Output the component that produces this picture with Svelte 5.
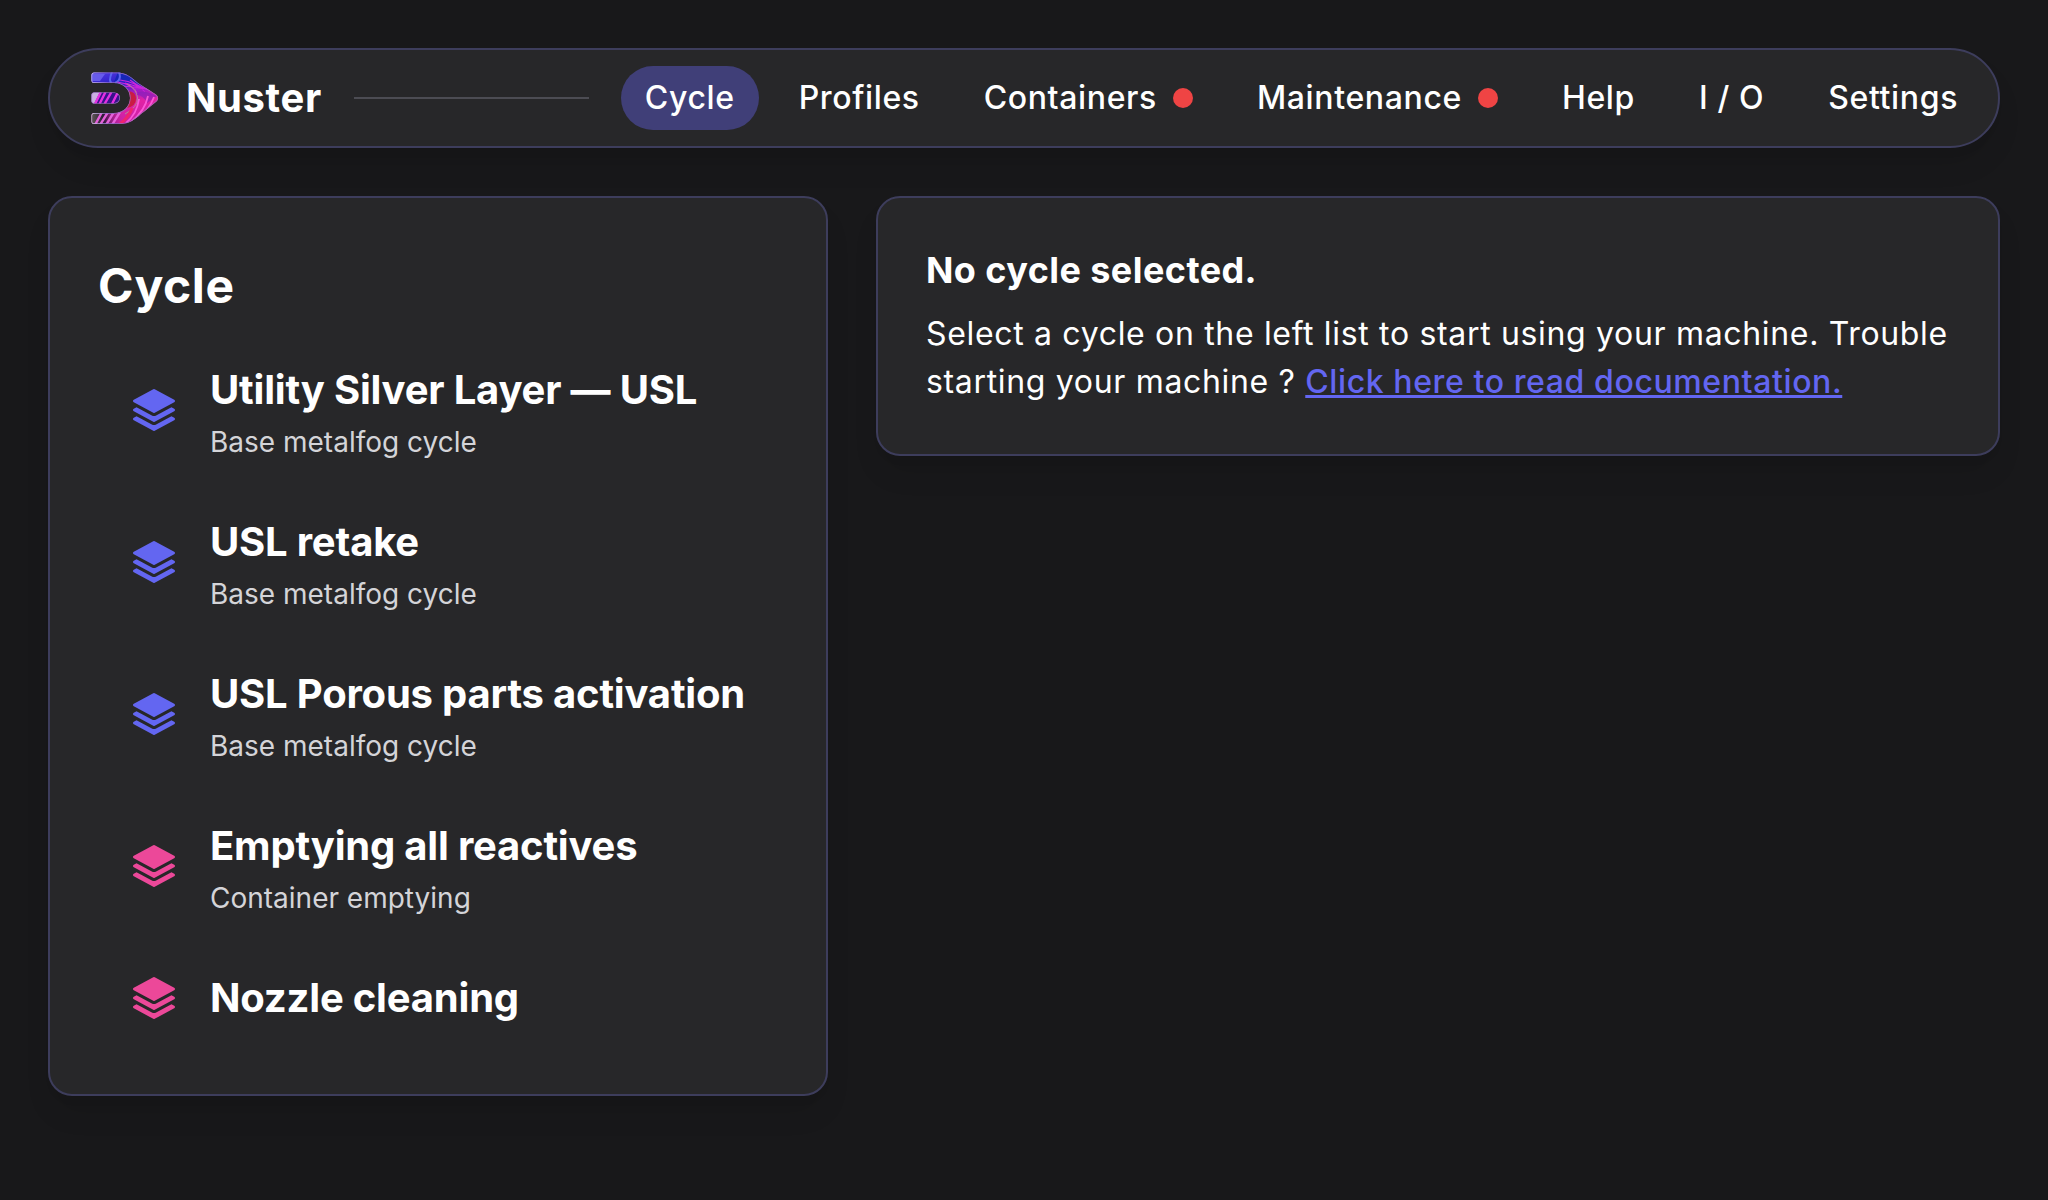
<script>
  const nav = [
    { label: 'Cycle', active: true },
    { label: 'Profiles' },
    { label: 'Containers', alert: true },
    { label: 'Maintenance', alert: true },
    { label: 'Help' },
    { label: 'I / O' },
    { label: 'Settings' },
  ];
  const cycles = [
    { name: 'Utility Silver Layer — USL', kind: 'Base metalfog cycle', tone: 'indigo' },
    { name: 'USL retake', kind: 'Base metalfog cycle', tone: 'indigo' },
    { name: 'USL Porous parts activation', kind: 'Base metalfog cycle', tone: 'indigo' },
    { name: 'Emptying all reactives', kind: 'Container emptying', tone: 'pink' },
    { name: 'Nozzle cleaning', tone: 'pink' },
  ];
</script>

<div class="page">
  <header class="panel bar">
    <svg class="logo" viewBox="11 12 68 53" aria-hidden="true">
      <defs>
        <linearGradient id="body" x1="0.25" y1="0" x2="0.5" y2="1">
          <stop offset="0" stop-color="#4a35dc" />
          <stop offset="0.26" stop-color="#2a1cc4" />
          <stop offset="0.42" stop-color="#9c1cc4" />
          <stop offset="0.62" stop-color="#e322a4" />
          <stop offset="1" stop-color="#c322a8" />
        </linearGradient>
        <linearGradient id="edge" x1="0" y1="0" x2="1" y2="0">
          <stop offset="0" stop-color="#d9c9f0" />
          <stop offset="0.25" stop-color="#8a6ac4" />
          <stop offset="1" stop-color="#a56fae" />
        </linearGradient>
        <linearGradient id="foot" x1="0" y1="0" x2="1" y2="0">
          <stop offset="0" stop-color="#5e5a55" />
          <stop offset="0.4" stop-color="#2c1838" />
          <stop offset="1" stop-color="#c322a8" stop-opacity="0" />
        </linearGradient>
        <clipPath id="shape">
          <path d="M14 12.500H37C47 12.500 52 18 58 23L76 34.500Q80 38 76.500 41.500L61 54C54 60 49 64 40 64H14Q11.500 64 11.500 61.500V55.500Q11.500 53 14 53H34C43 53 50 46.500 50 38S43 23 34 23H14Q11.500 23 11.500 20.500V15Q11.500 12.500 14 12.500Z" />
        </clipPath>
        <clipPath id="tongue">
          <path d="M14 32.500H34.500A5.500 5.500 0 0 1 34.500 43.500H14Q11.500 43.500 11.500 41V35Q11.500 32.500 14 32.500Z" />
        </clipPath>
      </defs>
      <g clip-path="url(#shape)" fill="none">
        <rect x="11" y="12" width="69" height="53" fill="url(#body)" />
        <path d="M38 12C54 12 56 24 66 29L58 27C50 20 42 20 34 22Z" fill="#1726b8" />
        <rect x="11" y="52" width="32" height="13" fill="url(#foot)" />
        <path d="M11 14H25L20 21H11Z" fill="#675bea" />
        <path d="M49 31Q56 32 56 39T47 48Z" fill="#c91c42" />
        <path d="M32 23Q28 22 32 12M35 23Q42 20 39 12" stroke="#5a65f0" stroke-width="2" />
        <path d="M37 22Q53 24 58 34M40 20Q57 22 65 32M45 23L69 30M50 20Q62 29 76 32M53 29L74 28M43 26L62 28" stroke="#cb24dc" stroke-width="1.100" />
        <path d="M47 24Q57 29 57.500 38T45 54" stroke="#b78991" stroke-width="1" />
        <path d="M57 32Q66 30 77 36L67 43Q63 35 57 35Z" fill="#8120bd" fill-opacity="0.600" />
        <path d="M46 63Q57 54 59 39M51 62Q65 51 68 36M56 60Q69 51 74 37" stroke="#fa58d7" stroke-width="1.800" />
        <path d="M40 64Q49 57 52 48" stroke="#ee246f" stroke-width="3" />
        <path d="M15 65L22 52M20 65L28 52M26 65L34 52M32 65L40 52" stroke="#e561da" stroke-width="2.400" />
        <path d="M14 12.500H37C47 12.500 52 18 58 23L76 34.500Q80 38 76.500 41.500L61 54C54 60 49 64 40 64H14Q11.500 64 11.500 61.500V55.500Q11.500 53 14 53H34C43 53 50 46.500 50 38S43 23 34 23H14Q11.500 23 11.500 20.500V15Q11.500 12.500 14 12.500Z" stroke="url(#edge)" stroke-width="1.300" />
      </g>
      <g clip-path="url(#tongue)" fill="none">
        <rect x="11" y="32" width="30" height="12" fill="#39128c" />
        <path d="M11 32H20L14 44H11Z" fill="#c9b0e2" />
        <path d="M15 44L21 32M19.500 44L25.500 32M24.500 44L31.500 32M32 44L38 32" stroke="#e32fe0" stroke-width="2.400" />
        <path d="M14 32.500H34.500A5.500 5.500 0 0 1 34.500 43.500H14Q11.500 43.500 11.500 41V35Q11.500 32.500 14 32.500Z" stroke="#a57fc5" stroke-width="1.200" />
      </g>
    </svg>
    <span class="brand">Nuster</span>
    <span class="rule"></span>
    <nav>
      {#each nav as item}
        <a class="tab" class:active={item.active}>
          {item.label}
          {#if item.alert}<span class="dot"></span>{/if}
        </a>
      {/each}
    </nav>
  </header>

  <main>
    <section class="panel card">
      <h1>Cycle</h1>
      <ul>
        {#each cycles as cycle}
          <li>
            <svg class="icon {cycle.tone}" viewBox="0 0 24 24" fill="currentColor" aria-hidden="true">
              <path d="M11.644 1.59a.75.75 0 0 1 .712 0l9.75 5.25a.75.75 0 0 1 0 1.32l-9.75 5.25a.75.75 0 0 1-.712 0l-9.75-5.25a.75.75 0 0 1 0-1.32l9.75-5.25Z" />
              <path d="m3.265 10.602 7.668 4.129a2.250 2.250 0 0 0 2.134 0l7.668-4.130 1.370.739a.75.75 0 0 1 0 1.320l-9.750 5.250a.75.75 0 0 1-.710 0l-9.750-5.250a.75.75 0 0 1 0-1.320l1.370-.738Z" />
              <path d="m10.933 19.231-7.668-4.130-1.370.739a.75.75 0 0 0 0 1.320l9.750 5.250c.221.120.489.120.710 0l9.750-5.250a.75.75 0 0 0 0-1.320l-1.370-.738-7.668 4.130a2.250 2.250 0 0 1-2.134-.001Z" />
            </svg>
            <div>
              <h2>{cycle.name}</h2>
              {#if cycle.kind}<p class="kind">{cycle.kind}</p>{/if}
            </div>
          </li>
        {/each}
      </ul>
    </section>

    <section class="panel card">
      <h3>No cycle selected.</h3>
      <p class="hint">
        Select a cycle on the left list to start using your machine. Trouble starting your machine ?
        <a class="link">Click here to read documentation.</a>
      </p>
    </section>
  </main>
</div>

<style>
  :global(body) {
    background: #18181a;
  }
  h1, h2, h3, p, ul {
    margin: 0;
    padding: 0;
  }
  .page {
    box-sizing: border-box;
    min-height: 1200px;
    padding: 48px;
    color: #fff;
    font-family: Inter, 'Liberation Sans', sans-serif;
  }
  .panel {
    background: #272729;
    border: 2px solid #3d3d5c;
    box-shadow: 0 20px 30px -6px rgba(0, 0, 0, 0.1), 0 8px 12px -8px rgba(0, 0, 0, 0.1);
  }
  .bar {
    display: flex;
    align-items: center;
    padding: 16px 16px 16px 41px;
    border-radius: 50px;
    margin-bottom: 48px;
  }
  .logo {
    width: 68px;
    height: 53px;
    flex: none;
  }
  .brand {
    margin-left: 27px;
    font-size: 40px;
    line-height: 56px;
    font-weight: 700;
    letter-spacing: 0.6px;
  }
  .rule {
    flex: 1;
    height: 2px;
    margin: 0 32px;
    background: #4c4c53;
  }
  nav {
    display: flex;
    gap: 16px;
  }
  .tab {
    display: flex;
    align-items: center;
    gap: 16px;
    box-sizing: border-box;
    height: 64px;
    padding: 0 24px 2px;
    border-radius: 32px;
    font-size: 32px;
    font-weight: 500;
    letter-spacing: 0.63px;
    white-space: nowrap;
  }
  .active {
    background: #403f78;
  }
  .dot {
    width: 20px;
    height: 20px;
    margin-top: 2px;
    border-radius: 50%;
    background: #ef4444;
  }
  main {
    display: grid;
    grid-template-columns: 780px 1fr;
    gap: 48px;
    align-items: start;
  }
  .card {
    padding: 48px;
    border-radius: 24px;
  }
  h1 {
    font-size: 48px;
    line-height: 80px;
    font-weight: 700;
    letter-spacing: 0.6px;
    margin-bottom: 16px;
  }
  ul {
    display: flex;
    flex-direction: column;
    gap: 16px;
    list-style: none;
  }
  li {
    display: flex;
    align-items: center;
    gap: 32px;
    padding: 16px 32px;
  }
  .icon {
    width: 48px;
    height: 48px;
    flex: none;
  }
  .indigo {
    color: #6366f1;
  }
  .pink {
    color: #ec4899;
  }
  h2 {
    font-size: 40px;
    line-height: 64px;
    font-weight: 700;
    letter-spacing: -0.2px;
    white-space: nowrap;
  }
  .kind {
    font-size: 28px;
    line-height: 40px;
    color: #d4d4d8;
  }
  h3 {
    font-size: 36px;
    line-height: 48px;
    font-weight: 700;
    margin-bottom: 16px;
    letter-spacing: 0.42px;
  }
  .hint {
    font-size: 32px;
    line-height: 48px;
    letter-spacing: 0.67px;
  }
  .link {
    color: #6366f1;
    font-weight: 500;
    letter-spacing: 0.6px;
    text-decoration: underline;
    text-decoration-thickness: 3px;
  }
</style>
